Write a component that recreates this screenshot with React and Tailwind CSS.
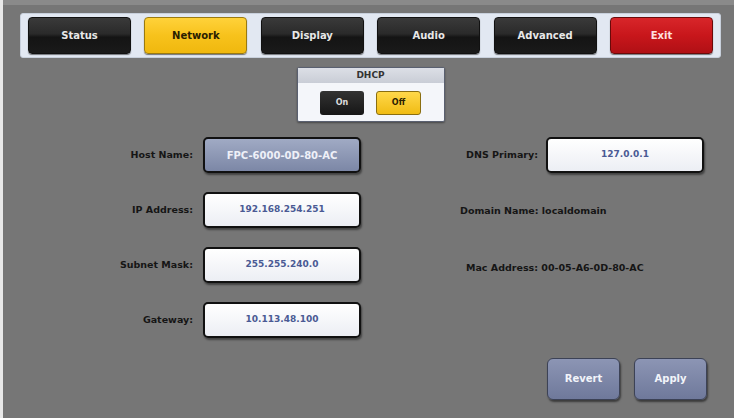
import React from 'react';

const tabs = [
  { name: 'Status', kind: 'dark' },
  { name: 'Network', kind: 'yellow' },
  { name: 'Display', kind: 'dark' },
  { name: 'Audio', kind: 'dark' },
  { name: 'Advanced', kind: 'dark' },
  { name: 'Exit', kind: 'red' },
];

const tabStyles = {
  dark: 'bg-[linear-gradient(#3a3a3a_0%,#2a2a2a_45%,#141414_55%,#1a1a1a_100%)] text-[#e8e8e8] border-[#111]',
  yellow: 'bg-[linear-gradient(#ffd23a_0%,#f7c21c_50%,#f0b80e_100%)] text-[#2a2000] border-[#9a7a10]',
  red: 'bg-[linear-gradient(#d8262a_0%,#c8161b_50%,#b01015_100%)] text-[#ffe0e0] border-[#6a0a0a]',
};

function Tab({ name, kind }) {
  return (
    <div
      className={`w-[103px] h-[37px] rounded-[4px] border flex items-center justify-center text-[10px] font-bold shadow-[0_1px_1px_rgba(0,0,0,0.5)] ${tabStyles[kind]}`}
    >
      {name}
    </div>
  );
}

function Field({ value, host }) {
  return (
    <div
      className={`w-[158px] h-[36px] rounded-[5px] border-2 border-[#111] flex items-center justify-center font-bold shadow-[1px_2px_2px_rgba(0,0,0,0.45)] ${
        host
          ? 'bg-[linear-gradient(#a0aac4,#7c87a6)] text-[#eef0f8] text-[10px]'
          : 'bg-[linear-gradient(#ffffff,#eceef4)] text-[#4a5a94] text-[9px]'
      }`}
    >
      {value}
    </div>
  );
}

function Row({ label, children }) {
  return (
    <div className="flex items-center h-[36px]">
      <div className="w-[195px] text-right text-[9.5px] font-bold text-[#151515] pr-[2px]">
        {label}
      </div>
      <div className="ml-[8px]">{children}</div>
    </div>
  );
}

function ActionButton({ label }) {
  return (
    <div className="w-[73px] h-[42px] rounded-[6px] border border-[#3c4256] bg-[linear-gradient(#8c95b4,#6f799b)] flex items-center justify-center text-[10px] font-bold text-[#f2f4fa] shadow-[1px_2px_2px_rgba(0,0,0,0.5)]">
      {label}
    </div>
  );
}

export default function App() {
  return (
    <div
      className="w-[734px] h-[418px] bg-[#767676] border-l-[3px] border-l-[#e8e8e8] overflow-hidden"
      style={{ fontFamily: '"DejaVu Sans", Verdana, sans-serif' }}
    >
      <div className="h-[5px] bg-[#8a8a8a]" />
      {/* tab bar */}
      <div className="ml-[17px] mt-[8px] w-[701px] h-[45px] bg-[#e2e8f2] rounded-[3px] px-[7px] flex items-center justify-between border border-[#c8d0dc]">
        {tabs.map((t) => (
          <Tab key={t.name} {...t} />
        ))}
      </div>

      {/* DHCP */}
      <div className="flex justify-center mt-[9px] pl-[4px]">
        <div className="w-[148px] h-[55px] bg-[#f4f6fa] border border-[#5a6070] rounded-[2px] flex flex-col shadow-[0_1px_2px_rgba(0,0,0,0.4)]">
          <div className="h-[15px] bg-[linear-gradient(#dcdfe6,#c9cdd6)] text-[9px] font-bold text-[#333] flex items-center justify-center">
            DHCP
          </div>
          <div className="flex-1 flex items-center justify-center gap-[12px] pt-[2px]">
            <div className="w-[44px] h-[24px] rounded-[3px] bg-[linear-gradient(#333,#161616)] text-[#ddd] text-[8px] font-bold flex items-center justify-center">
              On
            </div>
            <div className="w-[45px] h-[24px] rounded-[3px] border border-[#8a6e10] bg-[linear-gradient(#ffd84a,#f0bc14)] text-[#2a2000] text-[8px] font-bold flex items-center justify-center">
              Off
            </div>
          </div>
        </div>
      </div>

      {/* form */}
      <div className="flex mt-[15px] -ml-[3px]">
        <div className="w-[362px] flex flex-col gap-[19px]">
          <Row label="Host Name:">
            <Field value="FPC-6000-0D-80-AC" host />
          </Row>
          <Row label="IP Address:">
            <Field value="192.168.254.251" />
          </Row>
          <Row label="Subnet Mask:">
            <Field value="255.255.240.0" />
          </Row>
          <Row label="Gateway:">
            <Field value="10.113.48.100" />
          </Row>
        </div>
        <div className="flex-1 flex flex-col">
          <div className="flex items-center h-[36px]">
            <div className="w-[178px] text-right text-[9.5px] font-bold text-[#151515] pr-[2px]">
              DNS Primary:
            </div>
            <div className="ml-[6px]">
              <Field value="127.0.0.1" />
            </div>
          </div>
          <div className="mt-[31px] pl-[98px] text-[9.5px] font-bold text-[#151515]">
            Domain Name: localdomain
          </div>
          <div className="mt-[43px] pl-[104px] text-[9.5px] font-bold text-[#151515]">
            Mac Address: 00-05-A6-0D-80-AC
          </div>
          <div className="mt-[82px] pl-[185px] flex gap-[14px]">
            <ActionButton label="Revert" />
            <ActionButton label="Apply" />
          </div>
        </div>
      </div>
    </div>
  );
}
